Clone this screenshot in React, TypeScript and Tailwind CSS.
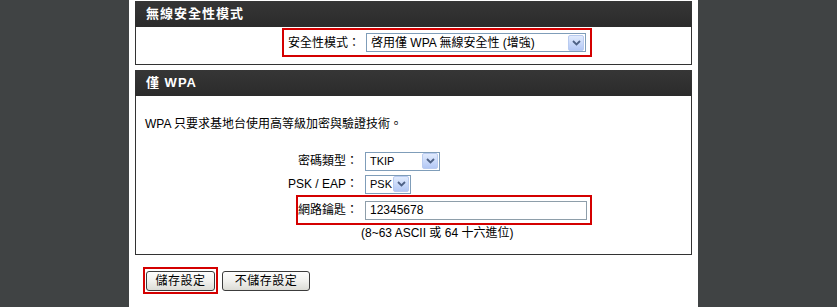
import React from "react";

const font = { fontFamily: '"Liberation Sans", "Noto Sans CJK TC", sans-serif' };

function Arrow() {
    return (
        <div className="w-[16px] h-[16px] mr-[1px] rounded-[2px] border border-[#b9cbf0] bg-gradient-to-b from-[#e1ebfd] to-[#b3c8f5] flex items-center justify-center">
            <svg width="9" height="6" viewBox="0 0 9 6">
                <path d="M1 1 L4.5 4.5 L8 1" fill="none" stroke="#4d6185" strokeWidth="1.8" />
            </svg>
        </div>
    );
}

function Select({ value, width, small }: { value: string; width: string; small?: boolean }) {
    return (
        <div className={`${width} h-[19px] border border-[#7f9db9] bg-white flex items-center justify-between`}>
            <span className={`pl-[4px] leading-none text-black ${small ? "text-[11px]" : "text-[12px]"}`}>{value}</span>
            <Arrow />
        </div>
    );
}

function Header({ title }: { title: string }) {
    return (
        <div className="h-[26px] bg-gradient-to-b from-[#363636] to-[#2b2b2b] flex items-center pl-[11px] text-white font-bold text-[13px] tracking-[1px]">
            {title}
        </div>
    );
}

function Button({ label, width }: { label: string; width: string }) {
    return (
        <div className={`${width} h-[20px] rounded-[3px] border border-[#3c3c3c] bg-gradient-to-b from-[#fdfdfd] via-[#f1f1ee] to-[#dcdcd6] flex items-center justify-center text-[12px] tracking-[0.5px] text-black`}>
            {label}
        </div>
    );
}

export default function App() {
    return (
        <div className="flex w-[837px] h-[307px] overflow-hidden" style={font}>
            <div className="w-[129px] bg-[#404344]" />

            <div className="w-[569px] bg-white px-[6px] pt-[1px]">
                {/* 無線安全性模式 */}
                <Header title="無線安全性模式" />
                <div className="border-x border-b border-[#333] pt-[1px] pb-[7px]">
                    <div className="ml-[146px] w-[310px] h-[29px] border-2 border-[#d40000] flex items-center pl-[4px] pr-[4px] gap-[6px]">
                        <span className="w-[72px] text-[12px] text-black whitespace-nowrap">安全性模式：</span>
                        <Select value="啓用僅 WPA 無線安全性 (增強)" width="w-[220px]" />
                    </div>
                </div>

                {/* 僅 WPA */}
                <div className="mt-[5px]">
                    <Header title="僅 WPA" />
                    <div className="border-x border-b border-[#333] pt-[20px] pb-[13px] text-[12px] text-black flex flex-col">
                        <p className="pl-[9px] leading-[16px]">WPA 只要求基地台使用高等級加密與驗證技術。</p>

                        <div className="mt-[20px] flex items-center h-[18px]">
                            <span className="w-[222px] text-right">密碼類型：</span>
                            <div className="ml-[7px]">
                                <Select value="TKIP" width="w-[75px]" small />
                            </div>
                        </div>

                        <div className="mt-[5px] flex items-center h-[18px]">
                            <span className="w-[222px] text-right">PSK / EAP：</span>
                            <div className="ml-[7px]">
                                <Select value="PSK" width="w-[46px]" small />
                            </div>
                        </div>

                        <div className="mt-[2px] ml-[160px] w-[296px] h-[30px] border-2 border-[#d40000] flex items-center">
                            <span className="w-[60px] text-right">網路鑰匙：</span>
                            <div className="ml-[7px] w-[222px] h-[19px] border border-[#8e9eaa] bg-white flex items-center pl-[4px]">
                                12345678
                            </div>
                        </div>

                        <p className="ml-[225px] leading-[16px]">(8~63 ASCII 或 64 十六進位)</p>
                    </div>
                </div>

                <div className="mt-[12px] ml-[8px] flex items-center gap-[4px]">
                    <div className="w-[75px] h-[27px] border-2 border-[#d40000] flex items-center justify-center">
                        <Button label="儲存設定" width="w-[69px]" />
                    </div>
                    <Button label="不儲存設定" width="w-[88px]" />
                </div>
            </div>

            <div className="flex-1 bg-[#404344]" />
        </div>
    );
}
